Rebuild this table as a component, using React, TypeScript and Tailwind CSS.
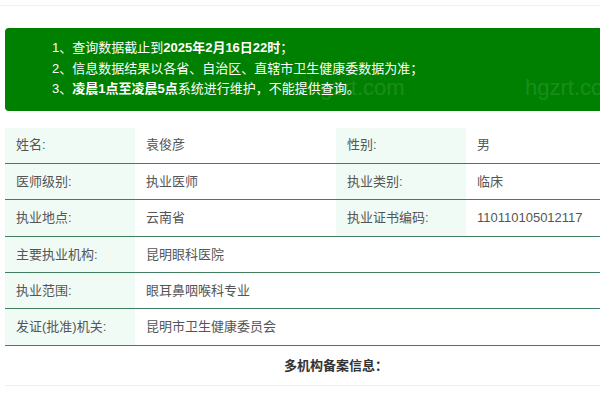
const rows = [
  { a: "姓名:", b: "袁俊彦", c: "性别:", d: "男" },
  { a: "医师级别:", b: "执业医师", c: "执业类别:", d: "临床" },
  { a: "执业地点:", b: "云南省", c: "执业证书编码:", d: "110110105012117" },
  { a: "主要执业机构:", b: "昆明眼科医院" },
  { a: "执业范围:", b: "眼耳鼻咽喉科专业" },
  { a: "发证(批准)机关:", b: "昆明市卫生健康委员会" },
];

export default function App() {
  return (
    <div
      className="w-[600px] h-[400px] overflow-hidden bg-white text-[13px] text-[#555]"
      style={{ fontFamily: "'Liberation Sans', 'Noto Sans CJK SC', sans-serif" }}
    >
      <div className="h-[6px] border-b border-[#f1f1f1]" />

      <div className="relative ml-[5px] mt-[22px] w-[640px] rounded-l-[4px] bg-[#008000] pt-[10px] pb-[11px] pl-[47px] leading-[20.5px] text-white">
        <p>
          1、查询数据截止到<b>2025年2月16日22时</b>；
        </p>
        <p>2、信息数据结果以各省、自治区、直辖市卫生健康委数据为准；</p>
        <p>
          3、<b>凌晨1点至凌晨5点</b>系统进行维护，不能提供查询。
        </p>
        <span className="pointer-events-none absolute left-[303px] top-[50px] text-[22px] text-white/10">
          hgzrt.com
        </span>
        <span className="pointer-events-none absolute left-[520px] top-[50px] text-[22px] text-white/10">
          hgzrt.com
        </span>
      </div>

      <div className="ml-[5px] mt-[17px] w-[700px]">
        {rows.map((r, i) => (
          <div
            key={i}
            className="grid h-[36.4px] grid-cols-[130px_201px_130px_1fr] items-center border-b border-[#3f7f60]"
          >
            <div className="flex h-full items-center bg-[#f0fbf5] pl-[11px]">{r.a}</div>
            {r.c ? (
              <>
                <div className="pl-[11px]">{r.b}</div>
                <div className="flex h-full items-center bg-[#f0fbf5] pl-[11px]">{r.c}</div>
                <div className="pl-[11px]">{r.d}</div>
              </>
            ) : (
              <div className="col-span-3 pl-[11px]">{r.b}</div>
            )}
          </div>
        ))}
        <div className="flex h-[40px] items-center border-b border-[#eeeeee] pl-[279px] font-bold text-[#333]">
          多机构备案信息：
        </div>
      </div>
    </div>
  );
}
